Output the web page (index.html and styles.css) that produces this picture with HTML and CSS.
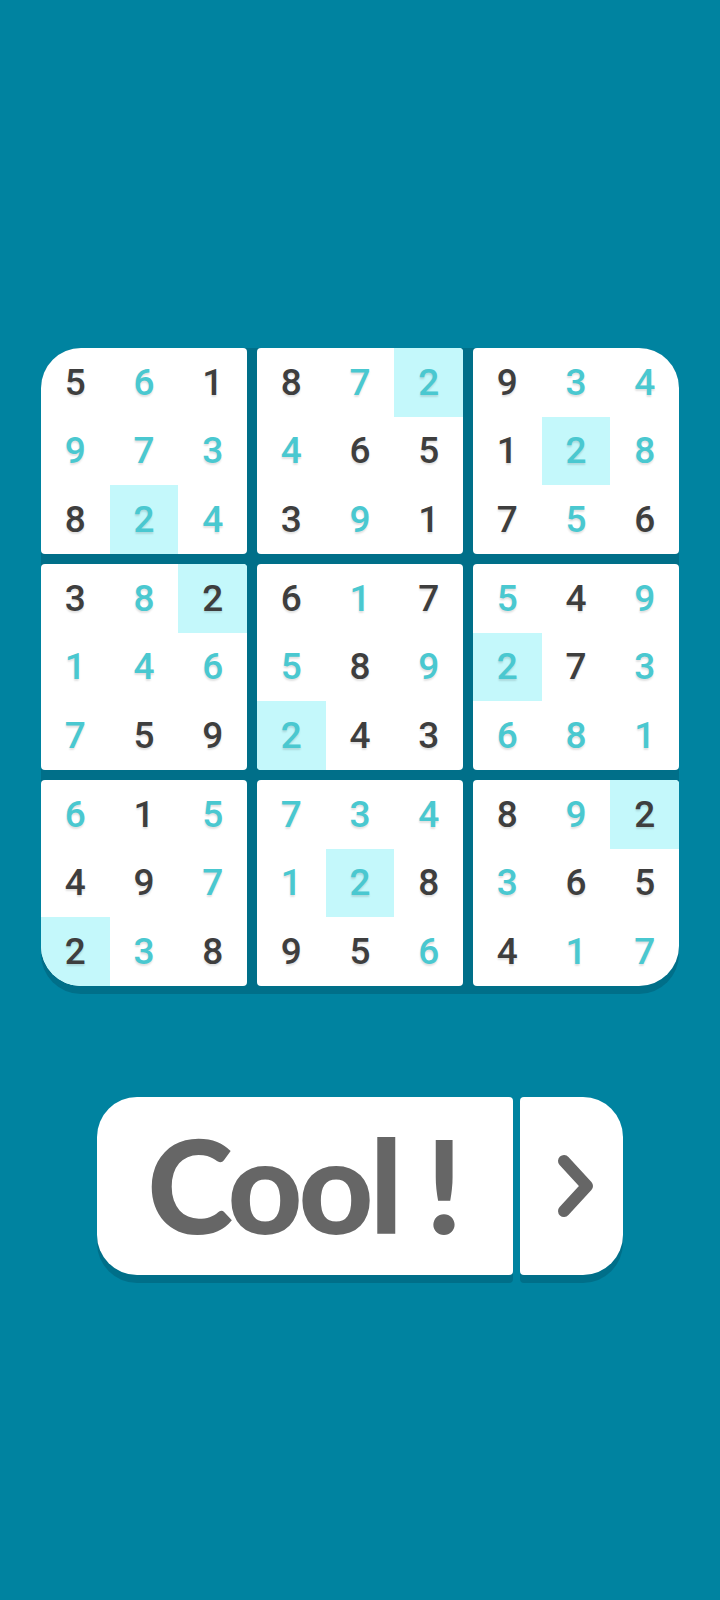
FILE: index.html
```html
<!DOCTYPE html>
<html>
<head>
<meta charset="utf-8">
<link rel="stylesheet" href="styles.css">
</head>
<body>
<div class="page">
  <div class="board">
    <div class="box r-tl">
      <span class="c d">5</span><span class="c t">6</span><span class="c d">1</span>
      <span class="c t">9</span><span class="c t">7</span><span class="c t">3</span>
      <span class="c d">8</span><span class="c t h">2</span><span class="c t">4</span>
    </div>
    <div class="box">
      <span class="c d">8</span><span class="c t">7</span><span class="c t h">2</span>
      <span class="c t">4</span><span class="c d">6</span><span class="c d">5</span>
      <span class="c d">3</span><span class="c t">9</span><span class="c d">1</span>
    </div>
    <div class="box r-tr">
      <span class="c d">9</span><span class="c t">3</span><span class="c t">4</span>
      <span class="c d">1</span><span class="c t h">2</span><span class="c t">8</span>
      <span class="c d">7</span><span class="c t">5</span><span class="c d">6</span>
    </div>
    <div class="box">
      <span class="c d">3</span><span class="c t">8</span><span class="c d h">2</span>
      <span class="c t">1</span><span class="c t">4</span><span class="c t">6</span>
      <span class="c t">7</span><span class="c d">5</span><span class="c d">9</span>
    </div>
    <div class="box">
      <span class="c d">6</span><span class="c t">1</span><span class="c d">7</span>
      <span class="c t">5</span><span class="c d">8</span><span class="c t">9</span>
      <span class="c t h">2</span><span class="c d">4</span><span class="c d">3</span>
    </div>
    <div class="box">
      <span class="c t">5</span><span class="c d">4</span><span class="c t">9</span>
      <span class="c t h">2</span><span class="c d">7</span><span class="c t">3</span>
      <span class="c t">6</span><span class="c t">8</span><span class="c t">1</span>
    </div>
    <div class="box r-bl">
      <span class="c t">6</span><span class="c d">1</span><span class="c t">5</span>
      <span class="c d">4</span><span class="c d">9</span><span class="c t">7</span>
      <span class="c d h">2</span><span class="c t">3</span><span class="c d">8</span>
    </div>
    <div class="box">
      <span class="c t">7</span><span class="c t">3</span><span class="c t">4</span>
      <span class="c t">1</span><span class="c t h">2</span><span class="c d">8</span>
      <span class="c d">9</span><span class="c d">5</span><span class="c t">6</span>
    </div>
    <div class="box r-br">
      <span class="c d">8</span><span class="c t">9</span><span class="c d h">2</span>
      <span class="c t">3</span><span class="c d">6</span><span class="c d">5</span>
      <span class="c d">4</span><span class="c t">1</span><span class="c t">7</span>
    </div>
  </div>

  <div class="actions">
    <div class="btn-main">Cool !</div>
    <div class="btn-next">
      <svg width="48" height="70" viewBox="0 0 48 70">
        <polyline points="13,10 36,35 13,60" fill="none" stroke="#666666" stroke-width="12" stroke-linecap="round" stroke-linejoin="round"/>
      </svg>
    </div>
  </div>
</div>
</body>
</html>
```

FILE: styles.css
```css
html, body {
  margin: 0;
  padding: 0;
}
body {
  background: #0083a0;
  width: 720px;
  height: 1600px;
  overflow: hidden;
  font-family: Roboto, "Liberation Sans", sans-serif;
}
.page {
  padding-top: 348px;
  display: flex;
  flex-direction: column;
  align-items: center;
}
.board {
  display: grid;
  grid-template-columns: repeat(3, 206px);
  grid-template-rows: repeat(3, 206px);
  gap: 10px;
  background: #006f89;
  border-radius: 40px;
  padding-bottom: 8px;
  width: 638px;
}
.box {
  background: #ffffff;
  border-radius: 4px;
  overflow: hidden;
  display: grid;
  grid-template-columns: repeat(3, 1fr);
  grid-template-rows: repeat(3, 1fr);
}
.r-tl { border-top-left-radius: 40px; }
.r-tr { border-top-right-radius: 40px; }
.r-bl { border-bottom-left-radius: 40px; }
.r-br { border-bottom-right-radius: 40px; }
.c {
  display: flex;
  align-items: center;
  justify-content: center;
  font-size: 37px;
  font-weight: 500;
  text-shadow: 0 2px 2px rgba(0, 0, 0, 0.12);
}
.d { color: #3e3e3e; }
.t { color: #4ac8d0; }
.h { background: #c4f8fb; }

.actions {
  margin-top: 103px;
  display: flex;
  gap: 7px;
  width: 526px;
  filter: drop-shadow(0 8px 0 #006f89);
}
.btn-main {
  flex: 0 0 416px;
  height: 178px;
  background: #ffffff;
  border-radius: 40px 4px 4px 40px;
  display: flex;
  align-items: center;
  justify-content: center;
  font-family: Lato, "Open Sans", sans-serif;
  font-weight: 900;
  font-size: 130px;
  letter-spacing: -4px;
  color: #666666;
  padding: 0 4px 4px 0;
  box-sizing: border-box;
}
.btn-next {
  flex: 0 0 103px;
  height: 178px;
  background: #ffffff;
  border-radius: 4px 40px 40px 4px;
  display: flex;
  align-items: center;
  justify-content: center;
  padding-left: 6px;
  box-sizing: border-box;
}
```
